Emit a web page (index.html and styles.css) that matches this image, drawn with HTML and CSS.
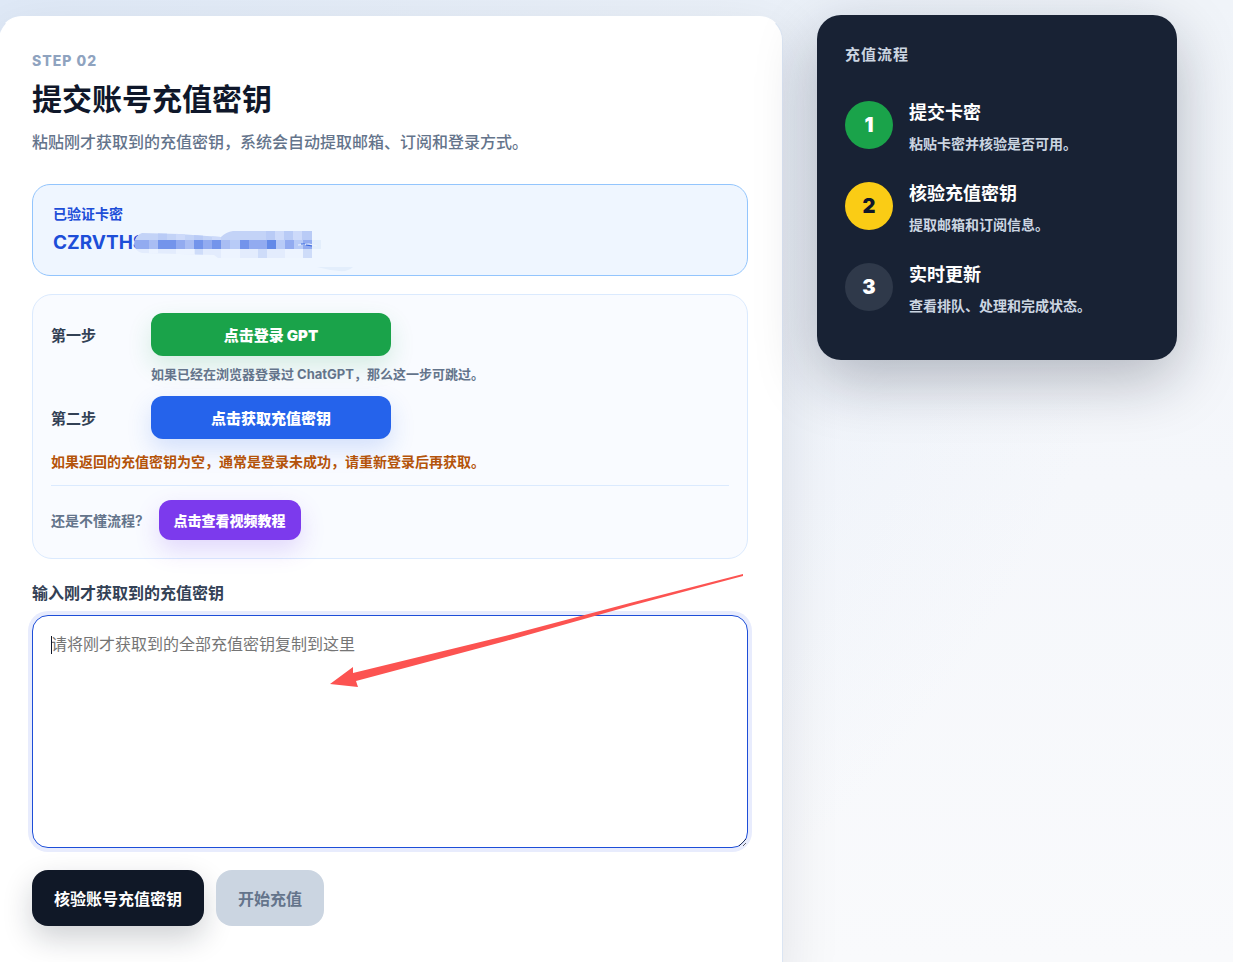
FILE: index.html
```html
<!DOCTYPE html>
<html lang="zh-CN">
<head>
    <meta charset="UTF-8">
    <meta name="viewport" content="width=device-width, initial-scale=1.0">
    <title>提交账号充值密钥</title>
    <link rel="stylesheet" href="styles.css">
</head>
<body>
    <div class="layout">
        <main class="card">
            <p class="eyebrow">STEP 02</p>
            <h1>提交账号充值密钥</h1>
            <p class="intro">粘贴刚才获取到的充值密钥，系统会自动提取邮箱、订阅和登录方式。</p>

            <section class="verified">
                <p class="verified-label">已验证卡密</p>
                <div class="verified-code">
                    <span>CZRVTHS</span>
                    <svg class="mask" width="220" height="42" viewBox="0 0 220 42" aria-hidden="true">
                        <defs>
                            <clipPath id="smear"><path d="M0 13Q1 4 8 2L45 3L87 6Q92 1 99 0H178V27H84L80 24L45 23L8 22Q1 20 0 13Z"/></clipPath>
                        </defs>
                        <g clip-path="url(#smear)">
                            <rect width="220" height="9" fill="#c3d3f7"/>
                            <rect y="9" width="220" height="9" fill="#92abf0"/>
                            <rect y="18" width="220" height="9" fill="#e3ecfd"/>
                            <path fill="#b9cbf6" d="M24 0h9v9h-9zM60 0h9v9h-9zM132 0h9v9h-9zM168 0h10v9h-10zM150 0h9v9h-9z"/>
                            <path fill="#cddafa" d="M42 0h9v9h-9zM78 0h9v9h-9zM141 0h9v9h-9zM159 0h9v9h-9z"/>
                            <path fill="#7394eb" d="M24 9h18v9H24zM60 9h9v9h-9zM78 9h9v9h-9zM106 9h9v9h-9zM133 9h9v9h-9z"/>
                            <path fill="#638ae8" d="M133 9h9v9h-9z"/>
                            <path fill="#a9bdf3" d="M15 9h9v9h-9zM51 9h9v9h-9zM87 9h9v9h-9z"/>
                            <path fill="#b8cbf7" d="M96 9h10v9H96zM142 9h9v9h-9zM160 9h9v9h-9z"/>
                            <path fill="#edf4ff" d="M15 18h9v9h-9zM42 18h18v9H42zM87 18h19v9H87zM151 18h18v9h-18z"/>
                            <path fill="#cedcf9" d="M61 18h8v9h-8zM169 18h9v9h-9zM124 18h9v9h-9z"/>
                        </g>
                        <path fill="#e3eefc" d="M178 9h9v9h-9zM183 36h36q-5 5-14 4Q194 39 183 36z"/>
                        <path fill="none" stroke="#edf4ff" d="M164 14l11-1 8 2"/>
                        <path fill="none" stroke="#3565df" d="M167 13h4M172 14l6 1"/>
                    </svg>
                </div>
            </section>

            <section class="guide">
                <div class="guide-row">
                    <span class="guide-label">第一步</span>
                    <a class="btn btn-green" href="#login">点击登录 GPT</a>
                </div>
                <p class="guide-hint">如果已经在浏览器登录过 ChatGPT，那么这一步可跳过。</p>
                <div class="guide-row">
                    <span class="guide-label">第二步</span>
                    <a class="btn btn-blue" href="#session">点击获取充值密钥</a>
                </div>
                <p class="guide-warning">如果返回的充值密钥为空，通常是登录未成功，请重新登录后再获取。</p>
                <div class="guide-help">
                    <span>还是不懂流程?</span>
                    <a class="btn btn-purple" href="#video">点击查看视频教程</a>
                </div>
            </section>

            <form>
                <label class="field-label" for="sessionKey">输入刚才获取到的充值密钥</label>
                <div class="field">
                    <textarea id="sessionKey" placeholder="请将刚才获取到的全部充值密钥复制到这里" autofocus></textarea>
                    <span class="caret"></span>
                    <svg class="arrow" width="414" height="114" viewBox="0 0 414 114" aria-hidden="true">
                        <path fill="#fc5351" d="M0 110L23 93V99L175 62L300 29L413 0V2L300 32L176 67L26 107L28 113Z"/>
                    </svg>
                </div>
                <div class="actions">
                    <button class="action action-dark" type="button">核验账号充值密钥</button>
                    <button class="action action-muted" type="button" disabled>开始充值</button>
                </div>
            </form>
        </main>

        <aside class="progress">
            <h2>充值流程</h2>
            <ol class="steps">
                <li>
                    <span class="step-num done">1</span>
                    <div><h3>提交卡密</h3><p>粘贴卡密并核验是否可用。</p></div>
                </li>
                <li>
                    <span class="step-num current">2</span>
                    <div><h3>核验充值密钥</h3><p>提取邮箱和订阅信息。</p></div>
                </li>
                <li>
                    <span class="step-num">3</span>
                    <div><h3>实时更新</h3><p>查看排队、处理和完成状态。</p></div>
                </li>
            </ol>
        </aside>
    </div>
</body>
</html>
```

FILE: styles.css
```css
* { margin: 0; padding: 0; box-sizing: border-box; }
body { font-family: Inter, "Noto Sans CJK SC", sans-serif; background: radial-gradient(circle at top left, #dfe9f7 0%, rgba(223,233,247,0) 75%), linear-gradient(180deg, #f0f4f9 0%, #f5f7fb 50%, #f9fafc 100%); color: #0f172a; }
a { color: inherit; text-decoration: none; }

.layout { display: grid; grid-template-columns: 1fr 360px; gap: 34px; align-items: start; height: 100vh; padding: 15px 56px 0 0; overflow: hidden; }

.card { margin-left: -2px; margin-top: 1px; padding: 32px 34px 64px 33px; background: #fff; border: 1px solid #dbe5f3; border-top-color: #fff; border-radius: 24px; box-shadow: 0 20px 60px rgba(15,23,42,0.1); }
.eyebrow { font-size: 14px; font-weight: 800; line-height: 24px; letter-spacing: 1px; color: #8fa3bf; }
h1 { margin-top: 6px; font-size: 30px; font-weight: 600; line-height: 40px; }
.intro { margin-top: 10px; font-size: 16px; font-weight: 500; line-height: 26px; color: #64748b; }

.verified { margin-top: 29px; padding: 18px 20px; background: #eff6ff; border: 1px solid #93c5fd; border-radius: 18px; color: #1d4ed8; }
.verified-label { font-size: 14px; font-weight: 700; line-height: 22px; }
.verified-code { position: relative; margin-top: 4px; font-size: 19px; font-weight: 700; line-height: 28px; }
.mask { position: absolute; left: 81px; top: 2px; }

.guide { margin-top: 18px; padding: 18px; background: #f9fbff; border: 1px solid #dbeafe; border-radius: 20px; }
.guide-row { display: grid; grid-template-columns: 100px 240px; align-items: center; }
.guide-label { font-size: 15px; font-weight: 600; color: #334155; }
.btn { display: flex; align-items: center; justify-content: center; height: 43px; border-radius: 12px; color: #fff; font-size: 15px; font-weight: 900; }
.btn-green { background: #1aa34a; box-shadow: 0 10px 24px rgba(22,163,74,0.16); }
.btn-blue { background: #2563eb; box-shadow: 0 10px 24px rgba(37,99,235,0.18); }
.btn-purple { height: 40px; padding: 0 15px; background: #7c3aed; box-shadow: 0 10px 24px rgba(124,58,237,0.18); font-size: 14px; }
.guide-hint { margin: 8px 0 12px 100px; font-size: 13px; font-weight: 700; line-height: 20px; color: #64748b; }
.guide-warning { margin-top: 12px; font-size: 14px; font-weight: 600; line-height: 22px; color: #b45309; }
.guide-help { display: flex; align-items: center; gap: 16px; margin-top: 12px; padding-top: 14px; border-top: 1px solid #dbeafe; font-size: 14px; font-weight: 600; color: #64748b; }

.field-label { display: block; margin-top: 22px; font-size: 16px; font-weight: 600; line-height: 24px; color: #334155; }
.field { position: relative; margin-top: 10px; }
textarea { display: block; width: 100%; height: 233px; padding: 15px 18px; background: #fff; border: 1px solid #1d4ed8; border-radius: 16px; outline: none; box-shadow: 0 0 0 4px #e8ecfd; font: inherit; font-size: 16px; line-height: 27px; color: #0f172a; caret-color: transparent; resize: vertical; }
textarea::placeholder { color: #757575; }
.caret { position: absolute; left: 19px; top: 21px; width: 1px; height: 18px; background: #0f172a; }
textarea:not(:placeholder-shown) + .caret { display: none; }
.arrow { position: absolute; left: 298px; top: -41px; pointer-events: none; }
.actions { display: flex; gap: 12px; margin-top: 22px; }
.action { height: 56px; padding: 0 22px; border: 0; border-radius: 16px; font: inherit; font-size: 16px; font-weight: 700; }
.action-dark { background: #101827; color: #fff; box-shadow: 0 12px 30px rgba(15,23,42,0.2); }
.action-muted { background: #cbd5e1; color: #64748b; }

.progress { padding: 28px 28px 42px; background: #182234; border-radius: 24px; box-shadow: 0 20px 60px rgba(15,23,42,0.28); color: #fff; }
.progress h2 { font-size: 15px; font-weight: 600; line-height: 24px; letter-spacing: 1px; color: #cbd5e1; }
.steps { display: grid; gap: 25px; margin-top: 33px; list-style: none; }
.steps li { display: flex; gap: 16px; }
.step-num { display: flex; align-items: center; justify-content: center; flex: none; width: 48px; height: 48px; margin-top: 1px; border-radius: 50%; background: #2f394a; font-size: 20px; font-weight: 900; }
.step-num.done { background: #1aa34a; }
.step-num.current { background: #facc15; color: #0f172a; }
.steps h3 { font-size: 18px; font-weight: 700; line-height: 26px; }
.steps p { margin-top: 6px; font-size: 14px; font-weight: 600; line-height: 24px; color: #cbd5e1; }
```
